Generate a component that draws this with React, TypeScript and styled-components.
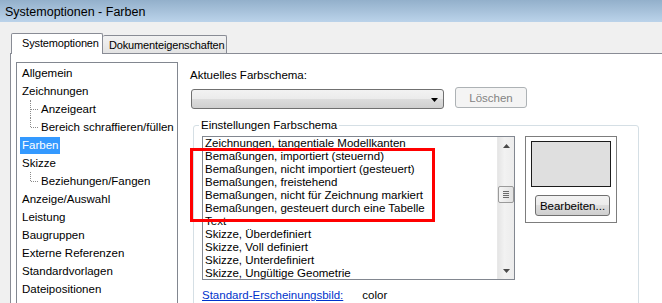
import React from 'react';
import styled, { createGlobalStyle } from 'styled-components';

type TreeNode = {
  label: string;
  child?: boolean;
  last?: boolean;
  selected?: boolean;
};

const tree: TreeNode[] = [
  { label: 'Allgemein' },
  { label: 'Zeichnungen' },
  { label: 'Anzeigeart', child: true },
  { label: 'Bereich schraffieren/füllen', child: true, last: true },
  { label: 'Farben', selected: true },
  { label: 'Skizze' },
  { label: 'Beziehungen/Fangen', child: true, last: true },
  { label: 'Anzeige/Auswahl' },
  { label: 'Leistung' },
  { label: 'Baugruppen' },
  { label: 'Externe Referenzen' },
  { label: 'Standardvorlagen' },
  { label: 'Dateipositionen' },
  { label: 'FeatureManager' },
];

const schemeItems = [
  'Zeichnungen, tangentiale Modellkanten',
  'Bemaßungen, importiert (steuernd)',
  'Bemaßungen, nicht importiert (gesteuert)',
  'Bemaßungen, freistehend',
  'Bemaßungen, nicht für Zeichnung markiert',
  'Bemaßungen, gesteuert durch eine Tabelle',
  'Text',
  'Skizze, Überdefiniert',
  'Skizze, Voll definiert',
  'Skizze, Unterdefiniert',
  'Skizze, Ungültige Geometrie',
];

export default function App() {
  return (
    <>
      <GlobalStyle />
      <Window>
        <TitleBar>Systemoptionen - Farben</TitleBar>
        <Body>
          <TabStrip>
            <Tab active>Systemoptionen</Tab>
            <Tab>Dokumenteigenschaften</Tab>
          </TabStrip>
          <TabPage>
            <Tree>
              {tree.map((n) => (
                <TreeItem key={n.label} child={n.child} last={n.last}>
                  <TreeLabel selected={n.selected}>{n.label}</TreeLabel>
                </TreeItem>
              ))}
            </Tree>
            <RightPane>
              <FieldLabel>Aktuelles Farbschema:</FieldLabel>
              <ControlRow>
                <Dropdown>
                  <Arrow viewBox="0 0 7 4">
                    <path d="M0 0h7L3.5 4z" fill="#000" />
                  </Arrow>
                </Dropdown>
                <DisabledButton>Löschen</DisabledButton>
              </ControlRow>
              <GroupBox>
                <Legend>Einstellungen Farbschema</Legend>
                <ListArea>
                  <ListBox>
                    <Items>
                      {schemeItems.map((s) => (
                        <Item key={s}>{s}</Item>
                      ))}
                    </Items>
                    <ScrollBar>
                      <ScrollBtn>
                        <svg width="7" height="4" viewBox="0 0 7 4">
                          <path d="M0 4h7L3.5 0z" fill="#4a4a4a" />
                        </svg>
                      </ScrollBtn>
                      <Thumb>
                        <Grip />
                        <Grip />
                        <Grip />
                        <Grip />
                      </Thumb>
                      <ScrollBtn bottom>
                        <svg width="7" height="4" viewBox="0 0 7 4">
                          <path d="M0 0h7L3.5 4z" fill="#4a4a4a" />
                        </svg>
                      </ScrollBtn>
                    </ScrollBar>
                  </ListBox>
                  <Preview>
                    <Swatch />
                    <Button>Bearbeiten...</Button>
                  </Preview>
                  <Highlight />
                </ListArea>
                <AppearanceRow>
                  <LinkText>Standard-Erscheinungsbild:</LinkText>
                  <span>color</span>
                </AppearanceRow>
              </GroupBox>
            </RightPane>
          </TabPage>
        </Body>
      </Window>
    </>
  );
}

const GlobalStyle = createGlobalStyle`
  html, body {
    margin: 0;
    padding: 0;
    background: #f0f0f0;
  }
  body {
    font-family: "Liberation Sans", Arial, sans-serif;
    font-size: 11.5px;
    color: #000;
  }
  * {
    box-sizing: border-box;
  }
`;

const Window = styled.div`
  width: 662px;
  height: 303px;
  overflow: hidden;
  display: flex;
  flex-direction: column;
  background: #f0f0f0;
`;

const TitleBar = styled.div`
  flex: 0 0 22px;
  display: flex;
  align-items: center;
  padding: 1px 0 0 5px;
  font-size: 12.5px;
  background: linear-gradient(#93b0cb, #bbd3ea);
`;

const Body = styled.div`
  flex: 1;
  display: flex;
  flex-direction: column;
  padding: 11px 0 0 10px;
`;

const TabStrip = styled.div`
  display: flex;
  align-items: flex-end;
  height: 21px;
  margin-bottom: -1px;
  padding-left: 1px;
  position: relative;
  z-index: 1;
`;

const Tab = styled.div<{ active?: boolean }>`
  display: flex;
  align-items: center;
  height: ${(p) => (p.active ? '21px' : '18px')};
  margin-bottom: ${(p) => (p.active ? '0' : '1px')};
  padding: ${(p) => (p.active ? '0 0 2px 10px' : '0 0 0 6px')};
  width: ${(p) => (p.active ? '92px' : '124px')};
  border: 1px solid #898c95;
  border-bottom: none;
  border-left: ${(p) => (p.active ? '1px solid #898c95' : 'none')};
  border-radius: 2px 2px 0 0;
  background: ${(p) => (p.active ? '#fff' : 'linear-gradient(#f2f2f2, #e3e3e3)')};
  font-size: 11px;
  letter-spacing: -0.15px;
  white-space: nowrap;
  overflow: hidden;
`;

const TabPage = styled.div`
  flex: 1;
  display: flex;
  align-items: flex-start;
  background: #fff;
  border-top: 1px solid #898c95;
  border-left: 1px solid #898c95;
  padding: 8px 0 0 5px;
`;

const Tree = styled.div`
  width: 162px;
  height: 260px;
  border: 1px solid #828790;
  padding-top: 1px;
  overflow: hidden;
`;

const TreeItem = styled.div<{ child?: boolean; last?: boolean }>`
  position: relative;
  height: 18px;
  display: flex;
  align-items: center;
  padding-left: ${(p) => (p.child ? '22px' : '3px')};
  white-space: nowrap;

  ${(p) =>
    p.child &&
    `
    &::before {
      content: '';
      position: absolute;
      left: 13px;
      top: 0;
      height: ${p.last ? '9px' : '18px'};
      border-left: 1px dotted #8c8c8c;
    }
    &::after {
      content: '';
      position: absolute;
      left: 14px;
      top: 9px;
      width: 7px;
      border-top: 1px dotted #8c8c8c;
    }
  `}
`;

const TreeLabel = styled.span<{ selected?: boolean }>`
  display: inline-flex;
  align-items: center;
  height: 17px;
  padding: 0 2px;
  background: ${(p) => (p.selected ? '#3399ff' : 'transparent')};
  color: ${(p) => (p.selected ? '#fff' : '#000')};
`;

const RightPane = styled.div`
  margin-left: 12px;
  display: flex;
  flex-direction: column;
`;

const FieldLabel = styled.div`
  margin-top: 5px;
  line-height: 16px;
`;

const ControlRow = styled.div`
  display: flex;
  align-items: flex-start;
  margin-top: 4px;
`;

const Dropdown = styled.div`
  position: relative;
  width: 253px;
  height: 20px;
  margin: 2px 0 0 1px;
  border: 1px solid #707070;
  border-radius: 3px;
  background: linear-gradient(#f2f2f2 0%, #ebebeb 50%, #dddddd 50%, #cfcfcf 100%);
`;

const Arrow = styled.svg`
  position: absolute;
  right: 5px;
  top: 8px;
  width: 7px;
  height: 4px;
`;

const DisabledButton = styled.div`
  display: flex;
  align-items: center;
  justify-content: center;
  width: 72px;
  height: 21px;
  margin-left: 11px;
  border: 1px solid #adb2b5;
  border-radius: 3px;
  background: #f4f4f4;
  color: #838383;
`;

const GroupBox = styled.fieldset`
  margin: 8px 0 0 3px;
  width: 446px;
  height: 200px;
  min-width: 0;
  padding: 3px 8px 0 8px;
  border: 1px solid #d5dfe5;
  border-radius: 3px;
`;

const Legend = styled.legend`
  padding: 0 2px;
  margin-left: -3px;
  line-height: 16px;
`;

const ListArea = styled.div`
  position: relative;
  display: flex;
  align-items: flex-start;
  gap: 10px;
`;

const ListBox = styled.div`
  display: flex;
  width: 313px;
  height: 144px;
  border: 1px solid #828790;
  overflow: hidden;
`;

const Items = styled.div`
  flex: 1;
  overflow: hidden;
  padding: 0 0 0 2px;
`;

const Item = styled.div`
  height: 13px;
  line-height: 13px;
  white-space: nowrap;
`;

const ScrollBar = styled.div`
  flex: 0 0 17px;
  display: flex;
  flex-direction: column;
  background: linear-gradient(to right, #e5e5e5, #f2f2f2 40%, #ececec);
  border-left: 1px solid #e8e8e8;
`;

const ScrollBtn = styled.div<{ bottom?: boolean }>`
  flex: 0 0 17px;
  display: flex;
  align-items: center;
  justify-content: center;
  margin-top: ${(p) => (p.bottom ? 'auto' : '0')};
`;

const Thumb = styled.div`
  margin: 32px 0 0 0;
  width: 16px;
  height: 17px;
  border: 1px solid #9a9a9a;
  border-radius: 2px;
  background: linear-gradient(to right, #f4f4f4, #e2e2e2);
  display: flex;
  flex-direction: column;
  align-items: center;
  justify-content: center;
  gap: 1px;
`;

const Grip = styled.div`
  width: 6px;
  height: 1px;
  background: #6b6b6b;
`;

const Preview = styled.div`
  width: 92px;
  height: 87px;
  border: 1px solid #7d7d7d;
  padding: 4px 0 0 5px;
  display: flex;
  flex-direction: column;
`;

const Swatch = styled.div`
  width: 80px;
  height: 46px;
  background: #dfdfdf;
  border: 1px solid #1c1c1c;
`;

const Button = styled.div`
  display: flex;
  align-items: center;
  justify-content: center;
  width: 75px;
  height: 21px;
  margin: 8px 0 0 4px;
  border: 1px solid #707070;
  border-radius: 3px;
  background: linear-gradient(#f2f2f2 0%, #ebebeb 50%, #dddddd 50%, #cfcfcf 100%);
`;

const Highlight = styled.div`
  position: absolute;
  left: -12px;
  top: 12px;
  width: 245px;
  height: 74px;
  border: 3px solid #f00;
  pointer-events: none;
`;

const AppearanceRow = styled.div`
  display: flex;
  gap: 19px;
  margin-top: 7px;
  line-height: 16px;
`;

const LinkText = styled.span`
  color: #0033cc;
  text-decoration: underline;
`;
